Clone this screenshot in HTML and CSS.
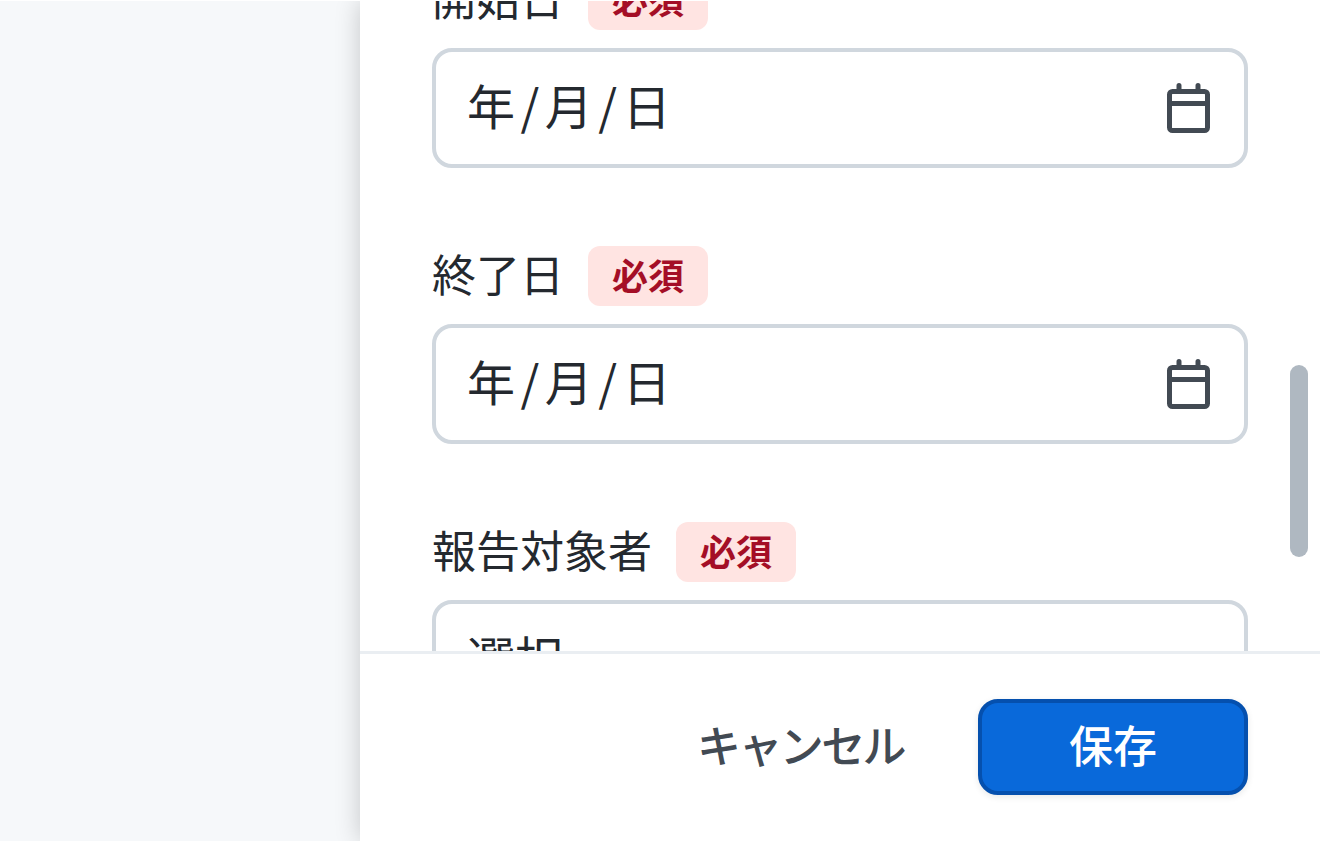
FILE: index.html
```html
<!DOCTYPE html>
<html lang="ja">
<head>
    <meta charset="UTF-8" />
    <title>編集</title>
    <link rel="stylesheet" href="styles.css">
</head>
<body>

<aside class="drawer">
    <div class="drawer-body">
        <!-- Scrolled part of the form -->
        <div class="form-scroll">
            <div class="field">
                <div class="field-label"><span class="label-text">開始日</span><span class="badge">必須</span></div>
                <div class="input">
                    <span class="input-text date-text">年/月/日</span>
                    <svg class="calendar-icon" viewBox="0 0 44 50"><rect x="2.5" y="8.5" width="38" height="39" rx="3"/><path d="M2.5 20.5h38M12 2.5v6M31 2.5v6"/></svg>
                </div>
            </div>
            <div class="field">
                <div class="field-label"><span class="label-text">終了日</span><span class="badge">必須</span></div>
                <div class="input">
                    <span class="input-text date-text">年/月/日</span>
                    <svg class="calendar-icon" viewBox="0 0 44 50"><rect x="2.5" y="8.5" width="38" height="39" rx="3"/><path d="M2.5 20.5h38M12 2.5v6M31 2.5v6"/></svg>
                </div>
            </div>
            <div class="field">
                <div class="field-label"><span class="label-text">報告対象者</span><span class="badge">必須</span></div>
                <div class="input">
                    <span class="input-text">選択</span>
                </div>
            </div>
        </div>
        <div class="scrollbar-thumb"></div>
    </div>
    <footer class="drawer-footer">
        <button class="btn-cancel">キャンセル</button>
        <button class="btn-save">保存</button>
    </footer>
</aside>

</body>
</html>
```
FILE: styles.css
```css
* {
    box-sizing: border-box;
    margin: 0;
    padding: 0;
    font-family: 'Noto Sans CJK JP', 'Noto Sans', sans-serif;
}

html, body {
    height: 100%;
    overflow: hidden;
}

body {
    background-color: #f6f8fa;
    border-top: 1px solid #ffffff;
    color: #24292f;
}

.drawer {
    display: flex;
    flex-direction: column;
    height: 840px;
    margin-left: 360px;
    background-color: #ffffff;
    box-shadow: 0 0 24px rgba(0, 0, 0, 0.2);
}

.drawer-body {
    position: relative;
    flex: 1;
    overflow: hidden;
    border-bottom: 3px solid #eaeef2;
}

.form-scroll {
    width: 960px;
    margin-top: -31px;
    padding: 0 72px;
}

.field {
    margin-bottom: 78px;
}

.field-label {
    display: flex;
    align-items: center;
    gap: 24px;
    height: 60px;
    margin-bottom: 18px;
    font-size: 44px;
    line-height: 60px;
}

.label-text {
    margin-top: -6px;
}

.badge {
    width: 120px;
    height: 60px;
    background-color: #ffe4e2;
    border-radius: 12px;
    color: #a40e26;
    font-size: 36px;
    font-weight: 700;
    line-height: 56px;
    text-align: center;
}

.input {
    display: flex;
    align-items: center;
    justify-content: space-between;
    height: 120px;
    padding: 0 33px 0 31px;
    background-color: #ffffff;
    border: 4px solid #d0d7de;
    border-radius: 20px;
    font-size: 48px;
}

.input-text {
    margin-top: -8px;
}

.date-text {
    letter-spacing: 5.5px;
}

.calendar-icon {
    width: 44px;
    height: 50px;
    fill: none;
    stroke: #424a53;
    stroke-width: 5;
    stroke-linecap: round;
}

.scrollbar-thumb {
    position: absolute;
    top: 364px;
    right: 12px;
    width: 18px;
    height: 192px;
    background-color: #afb8c1;
    border-radius: 9px;
}

.drawer-footer {
    display: flex;
    align-items: center;
    justify-content: flex-end;
    gap: 72px;
    height: 187px;
    padding: 0 72px 1px;
}

.btn-cancel {
    padding: 0 2px 6px 0;
    background: none;
    border: none;
    color: #424a53;
    font-size: 44px;
    font-weight: 500;
    letter-spacing: -2.6px;
}

.btn-save {
    width: 270px;
    height: 96px;
    padding-bottom: 6px;
    background-color: #0969da;
    border: 4px solid #0550ae;
    border-radius: 20px;
    box-shadow: 0 2px 6px rgba(31, 35, 40, 0.1);
    color: #ffffff;
    font-size: 44px;
    font-weight: 500;
}
```
